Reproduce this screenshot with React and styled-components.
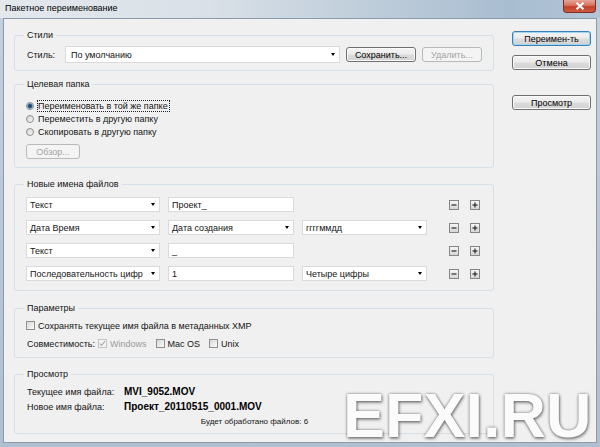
import React from 'react'
import styled, { createGlobalStyle } from 'styled-components'

const nameRows = [
  { type: 'Текст', value: 'Проект_' },
  { type: 'Дата Время', value: 'Дата создания', valueIsSelect: true, extra: 'ггггммдд' },
  { type: 'Текст', value: '_' },
  { type: 'Последовательность цифр', value: '1', extra: 'Четыре цифры' },
]

const Arrow = () => <Caret />

const CheckMark = () => (
  <svg width="7" height="7" viewBox="0 0 7 7">
    <polyline points="0.8,3.6 2.6,5.4 6.2,1" fill="none" stroke="#a9a9a9" strokeWidth="1.1" />
  </svg>
)

const MiniGlyph = ({ plus }) => (
  <svg width="8" height="8" viewBox="0 0 8 8">
    <line x1="1.5" y1="4" x2="6.5" y2="4" stroke="#2a2a2a" strokeWidth="1.2" />
    {plus && <line x1="4" y1="1.5" x2="4" y2="6.5" stroke="#2a2a2a" strokeWidth="1.2" />}
  </svg>
)

const App = () => {
  return (
    <>
      <GlobalStyle />
      <Window>
        <TitleBar>
          <Title>Пакетное переименование</Title>
          <CloseButton>
            <svg width="10" height="8" viewBox="0 0 10 8">
              <path d="M1.5 0.8 L8.5 7.2 M8.5 0.8 L1.5 7.2" stroke="#fff" strokeWidth="2" />
            </svg>
          </CloseButton>
        </TitleBar>
        <Client>
          <MainColumn>
            <GroupBox>
              <Legend>Стили</Legend>
              <StyleRow>
                <FieldLabel $w={33}>Стиль:</FieldLabel>
                <Select $w={278} $h={17} $pl={5}>
                  <span>По умолчанию</span>
                  <Arrow />
                </Select>
                <Button $w={70}>Сохранить...</Button>
                <Button $w={60} $disabled>Удалить...</Button>
              </StyleRow>
            </GroupBox>

            <GroupBox $gap={7}>
              <Legend>Целевая папка</Legend>
              <RadioList>
                <RadioRow>
                  <Radio $checked />
                  <RadioText $focused>Переименовать в той же папке</RadioText>
                </RadioRow>
                <RadioRow>
                  <Radio />
                  <RadioText>Переместить в другую папку</RadioText>
                </RadioRow>
                <RadioRow>
                  <Radio />
                  <RadioText>Скопировать в другую папку</RadioText>
                </RadioRow>
              </RadioList>
              <BrowseRow>
                <Button $w={54} $disabled>Обзор...</Button>
              </BrowseRow>
            </GroupBox>

            <GroupBox $gap={10}>
              <Legend>Новые имена файлов</Legend>
              <NameRows>
                {nameRows.map((row, i) => (
                  <NameRow key={i}>
                    <Select>
                      <span>{row.type}</span>
                      <Arrow />
                    </Select>
                    {row.valueIsSelect ? (
                      <Select>
                        <span>{row.value}</span>
                        <Arrow />
                      </Select>
                    ) : (
                      <TextField>{row.value}</TextField>
                    )}
                    {row.extra ? (
                      <Select>
                        <span>{row.extra}</span>
                        <Arrow />
                      </Select>
                    ) : (
                      <span />
                    )}
                    <MiniButtons>
                      <MiniButton><MiniGlyph /></MiniButton>
                      <MiniButton><MiniGlyph plus /></MiniButton>
                    </MiniButtons>
                  </NameRow>
                ))}
              </NameRows>
            </GroupBox>

            <GroupBox $gap={11}>
              <Legend>Параметры</Legend>
              <OptionsList>
                <CheckRow>
                  <CheckBox />
                  <span>Сохранять текущее имя файла в метаданных XMP</span>
                </CheckRow>
                <CompatRow>
                  <FieldLabel $w={63}>Совместимость:</FieldLabel>
                  <CheckRow $disabled>
                    <CheckBox $disabled><CheckMark /></CheckBox>
                    <span>Windows</span>
                  </CheckRow>
                  <CheckRow>
                    <CheckBox />
                    <span>Mac OS</span>
                  </CheckRow>
                  <CheckRow>
                    <CheckBox />
                    <span>Unix</span>
                  </CheckRow>
                </CompatRow>
              </OptionsList>
            </GroupBox>

            <GroupBox $gap={10}>
              <Legend>Просмотр</Legend>
              <PreviewGrid>
                <span>Текущее имя файла:</span>
                <Value>MVI_9052.MOV</Value>
                <span>Новое имя файла:</span>
                <Value>Проект_20110515_0001.MOV</Value>
                <Footer>Будет обработано файлов: 6</Footer>
              </PreviewGrid>
            </GroupBox>
          </MainColumn>

          <ButtonColumn>
            <Button $w={79} $default>Переимен-ть</Button>
            <Button $w={79}>Отмена</Button>
            <Button $w={79} $gap={25}>Просмотр</Button>
          </ButtonColumn>
        </Client>
        <Watermark>EFXI.RU</Watermark>
      </Window>
    </>
  )
}

export default App

const GlobalStyle = createGlobalStyle`
  * { box-sizing: border-box; }
  body {
    margin: 0;
    font-family: 'Liberation Sans', Arial, sans-serif;
    font-size: 9px;
    color: #141414;
  }
`
const Window = styled.div`
  position: relative;
  width: 600px;
  height: 447px;
  display: flex;
  flex-direction: column;
  padding: 0 3px 4px 3px;
  background: linear-gradient(180deg, #c3d0de 0%, #aebfd0 100%);
  overflow: hidden;
`
const TitleBar = styled.div`
  height: 18px;
  margin: 0 -3px;
  padding: 0 4px 0 5px;
  display: flex;
  align-items: flex-start;
  justify-content: space-between;
  background: linear-gradient(90deg, #e3e8ed 0%, #d9e0e7 35%, #c0cedb 60%, #a9bdd1 85%, #b3c5d6 100%);
`
const Title = styled.span`
  line-height: 17px;
  color: #000;
`
const CloseButton = styled.div`
  width: 33px;
  height: 13px;
  display: flex;
  align-items: center;
  justify-content: center;
  border: 1px solid #7c2f25;
  border-top: none;
  border-radius: 0 0 4px 4px;
  background: linear-gradient(180deg, #e7a597 0%, #d6705d 45%, #c2412d 55%, #cf5b3e 100%);
`
const Client = styled.div`
  flex: 1;
  display: flex;
  gap: 18px;
  padding: 10px 5px 0 10px;
  border: 1px solid #8b9bab;
  background: #f0f0f0;
`
const MainColumn = styled.div`
  width: 480px;
  display: flex;
  flex-direction: column;
`
const ButtonColumn = styled.div`
  width: 79px;
  padding-top: 2px;
  display: flex;
  flex-direction: column;
  gap: 9px;
`
const GroupBox = styled.fieldset`
  margin: ${p => p.$gap || 0}px 0 0;
  min-width: 0;
  padding: 0 11px;
  border: 1px solid #d5dfe5;
  border-radius: 3px;
`
const Legend = styled.legend`
  margin-left: -2px;
  padding: 0 3px;
  line-height: 12px;
  font-size: 9px;
`
const StyleRow = styled.div`
  height: 17px;
  margin: 5px 0 7px;
  display: flex;
  align-items: center;
  gap: 6px;
`
const FieldLabel = styled.span`
  width: ${p => p.$w}px;
  padding-left: 1px;
  flex-shrink: 0;
  white-space: nowrap;
`
const Select = styled.div`
  width: ${p => (p.$w ? `${p.$w}px` : 'auto')};
  height: ${p => p.$h || 15}px;
  padding: 0 4px 0 ${p => p.$pl || 3}px;
  display: flex;
  align-items: center;
  justify-content: space-between;
  background: #fff;
  border: 1px solid #dadada;
  white-space: nowrap;
  overflow: hidden;
`
const Caret = styled.span`
  width: 0;
  height: 0;
  flex-shrink: 0;
  border-left: 2.5px solid transparent;
  border-right: 2.5px solid transparent;
  border-top: 3px solid #000;
`
const TextField = styled.div`
  height: 15px;
  padding: 0 3px;
  display: flex;
  align-items: center;
  background: #fff;
  border: 1px solid #dadada;
`
const Button = styled.div`
  width: ${p => p.$w}px;
  height: 15px;
  margin-top: ${p => p.$gap ? p.$gap - 9 : 0}px;
  flex-shrink: 0;
  display: flex;
  align-items: center;
  justify-content: center;
  border-radius: 3px;
  color: ${p => (p.$disabled ? '#a3a3a3' : '#000')};
  border: 1px solid ${p => (p.$disabled ? '#b6babd' : p.$default ? '#3c7fb1' : '#707070')};
  background: ${p =>
    p.$disabled
      ? '#f4f4f4'
      : 'linear-gradient(180deg, #f4f4f4 0%, #ebebeb 48%, #dddddd 52%, #d0d0d0 100%)'};
  box-shadow: inset 0 0 0 1px ${p => (p.$disabled ? '#f4f4f4' : p.$default ? '#9fd6f6' : '#fbfbfb')};
`
const RadioList = styled.div`
  padding-top: 9px;
  display: flex;
  flex-direction: column;
`
const RadioRow = styled.div`
  height: 13px;
  display: flex;
  align-items: center;
  gap: 3px;
`
const Radio = styled.span`
  width: 8px;
  height: 8px;
  flex-shrink: 0;
  border-radius: 50%;
  border: 1px solid #8d8d8d;
  background: ${p =>
    p.$checked
      ? 'radial-gradient(circle, #1d4670 0, #1d4670 1.4px, #5c98cf 2.4px, #e8e8e8 3.2px)'
      : 'linear-gradient(135deg, #d4d4d4 0%, #f7f7f7 100%)'};
`
const RadioText = styled.span`
  padding: 0 1px 0 0;
  line-height: 10px;
  border: 1px dotted ${p => (p.$focused ? '#222' : 'transparent')};
`
const BrowseRow = styled.div`
  margin: 6px 0 8px;
  display: flex;
`
const NameRows = styled.div`
  padding: 7px 0 9px;
  display: flex;
  flex-direction: column;
  gap: 8px;
`
const NameRow = styled.div`
  height: 15px;
  display: grid;
  grid-template-columns: 134px 126px 125px 1fr;
  column-gap: 8px;
`
const MiniButtons = styled.div`
  padding-right: 2px;
  display: flex;
  align-items: center;
  justify-content: flex-end;
  gap: 11px;
`
const MiniButton = styled.span`
  width: 10px;
  height: 10px;
  display: flex;
  align-items: center;
  justify-content: center;
  border: 1px solid #858585;
  background: linear-gradient(180deg, #f6f6f6 0%, #d6d6d6 100%);
`
const OptionsList = styled.div`
  padding: 5px 0 7px;
  display: flex;
  flex-direction: column;
  gap: 5px;
`
const CheckRow = styled.div`
  height: 13px;
  display: flex;
  align-items: center;
  gap: 3px;
  color: ${p => (p.$disabled ? '#9b9b9b' : 'inherit')};
`
const CheckBox = styled.span`
  width: 9px;
  height: 9px;
  flex-shrink: 0;
  display: flex;
  align-items: center;
  justify-content: center;
  border: 1px solid ${p => (p.$disabled ? '#c4c4c4' : '#8f8f8f')};
  background: ${p => (p.$disabled ? '#f4f4f4' : 'linear-gradient(135deg, #d8d8d8 0%, #fafafa 100%)')};
`
const CompatRow = styled.div`
  display: flex;
  align-items: center;
  gap: 9px;
`
const PreviewGrid = styled.div`
  padding: 4px 0 4px 1px;
  display: grid;
  grid-template-columns: 97px 1fr;
  grid-auto-rows: 15px;
  align-items: center;
`
const Value = styled.span`
  font-size: 10px;
  font-weight: bold;
  color: #000;
`
const Footer = styled.span`
  grid-column: 1 / -1;
  text-align: center;
  font-size: 8px;
`
const Watermark = styled.div`
  position: absolute;
  left: 343px;
  top: 384px;
  font-family: 'Liberation Sans', Arial, sans-serif;
  font-weight: bold;
  font-size: 63px;
  line-height: 1;
  color: #fbfbfb;
  text-shadow: 0 0 3px rgba(0, 0, 0, 0.55), 1px 2px 3px rgba(0, 0, 0, 0.35);
  pointer-events: none;
`
